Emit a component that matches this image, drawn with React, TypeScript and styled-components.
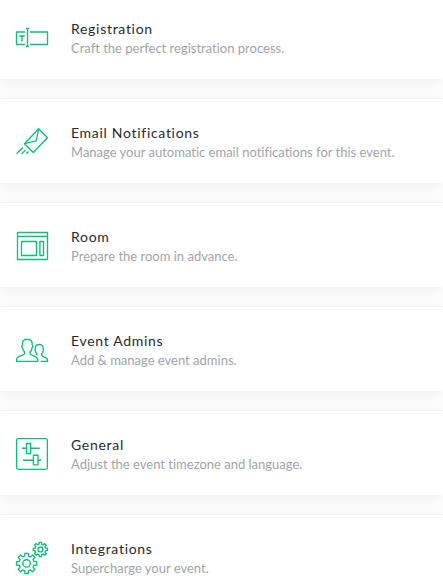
import React from "react";
import styled, { createGlobalStyle } from "styled-components";

const GlobalStyle = createGlobalStyle`
  *, *::before, *::after { box-sizing: border-box; }
  body {
    margin: 0;
    background: #fdfdfd;
    font-family: Lato, "Open Sans", sans-serif;
  }
`;

const Page = styled.main`
  height: 100vh;
  overflow: hidden;
`;

const CardList = styled.ul`
  display: flex;
  flex-direction: column;
  gap: 19px;
  margin: -6px 0 0;
  padding: 0;
  list-style: none;
`;

const Card = styled.li`
  display: flex;
  align-items: flex-start;
  gap: 23px;
  padding: 24px 16px 22px;
  background: #fff;
  border-top: 1px solid #f2f2f2;
  box-shadow: 0 4px 14px rgba(0, 0, 0, 0.05);
`;

const Icon = styled.svg`
  flex: none;
  width: 32px;
  height: 32px;
  margin-top: 3px;
  overflow: visible;
  fill: none;
  stroke: #0ac275;
  stroke-width: 1.35;
  stroke-linejoin: round;
`;

const CardText = styled.div`
  min-width: 0;
`;

const Title = styled.h2`
  margin: 0;
  color: #262a2e;
  font-size: 14px;
  font-weight: 400;
  line-height: 20px;
  letter-spacing: 0.05em;
`;

const Description = styled.p`
  margin: 0;
  color: #a0a5aa;
  font-size: 13px;
  line-height: 18px;
  font-variant-ligatures: none;
`;

function gearPath(cx: number, cy: number, outer: number, inner: number) {
  const teeth = 8;
  const step = (Math.PI * 2) / teeth;
  const points: string[] = [];
  for (let i = 0; i < teeth; i++) {
    const a = i * step - Math.PI / 2;
    const corners: [number, number][] = [
      [inner, -0.24],
      [outer, -0.17],
      [outer, 0.17],
      [inner, 0.24],
    ];
    corners.forEach(([r, offset]) => {
      const x = cx + r * Math.cos(a + offset);
      const y = cy + r * Math.sin(a + offset);
      points.push(`${x.toFixed(2)} ${y.toFixed(2)}`);
    });
  }
  return `M${points.join("L")}Z`;
}

const sections = [
  {
    title: "Registration",
    description: "Craft the perfect registration process.",
    icon: (
      <>
        <path d="M9 10H.5v12.5H9M14 10h17.5v12.5H14M11.5 6.5v18M10 6.5h3M10 24.5h3" />
        <path d="M4 15v-1h4v1M6 13.8v5M5.2 18.6h1.6" />
      </>
    ),
  },
  {
    title: "Email Notifications",
    description: "Manage your automatic email notifications for this event.",
    icon: (
      <>
        <path d="M22.7 2.8l8.8 8.9-14.2 14.8-8.8-8.8z" />
        <path d="M22.7 2.8L20.2 14.8 8.5 17.7" />
        <path d="M6.8 21.5L.6 27.8M9.2 24.2l-3.7 3.9M12.4 25.5l-2 2.2" />
      </>
    ),
  },
  {
    title: "Room",
    description: "Prepare the room in advance.",
    icon: (
      <>
        <path d="M1.5 2.5h30v27h-30zM1.5 6.5h30" />
        <path d="M5.5 11.5h15v14h-15zM23.9 11.5h3.6v14h-3.6z" />
      </>
    ),
  },
  {
    title: "Event Admins",
    description: "Add & manage event admins.",
    icon: (
      <>
        <path d="M.6 27.4h21.2v-1.7c0-2.6-2.5-3.3-4.7-4.1-1.8-.6-3-1-3-2.2v-1.5c1.4-1.2 1.8-2.6 1.9-4 .9-.5 1.1-2.1.2-2.7.5-3.8-1.2-6-4.9-6s-5.5 2.2-4.9 6c-.9.6-.7 2.2.2 2.7.1 1.4.7 2.8 1.9 4v1.5c0 1.2-1.3 1.7-3 2.2-2.3.8-4.9 1.6-4.9 4.1z" />
        <path d="M24.6 27.4h6.9v-1.2c0-2.3-1.8-2.7-3.6-3.4-1.5-.6-2.2-.9-2.2-1.8v-1.2c1-.8 1.3-1.8 1.3-2.8.7-.4.7-1.4.1-1.9.3-3-1-4.6-3.9-4.6s-4.1 1.6-3.8 4.6c-.6.5-.5 1.5.1 1.9.1 1 .5 2 1.3 2.8v1.5" />
      </>
    ),
  },
  {
    title: "General",
    description: "Adjust the event timezone and language.",
    icon: (
      <>
        <rect x=".6" y=".6" width="30.8" height="30.8" rx="1.8" />
        <path d="M6 10.2h4.5M14.7 10.2h9M10.5 5.5h4.2v10h-4.2z" />
        <path d="M7 22.2h10.4M22 22.2h3M17.4 17.2H22v9.6h-4.6z" />
      </>
    ),
  },
  {
    title: "Integrations",
    description: "Supercharge your event.",
    icon: (
      <>
        <path d={gearPath(10.6, 21.4, 10.2, 7.6)} />
        <circle cx="10.6" cy="21.4" r="3.7" />
        <path d={gearPath(24.4, 7.4, 7.2, 5.4)} />
        <circle cx="24.4" cy="7.4" r="2.4" />
      </>
    ),
  },
];

export default function App() {
  return (
    <>
      <GlobalStyle />
      <Page>
        <CardList>
          {sections.map((section) => (
            <Card key={section.title}>
              <Icon viewBox="0 0 32 32" aria-hidden="true">
                {section.icon}
              </Icon>
              <CardText>
                <Title>{section.title}</Title>
                <Description>{section.description}</Description>
              </CardText>
            </Card>
          ))}
        </CardList>
      </Page>
    </>
  );
}
